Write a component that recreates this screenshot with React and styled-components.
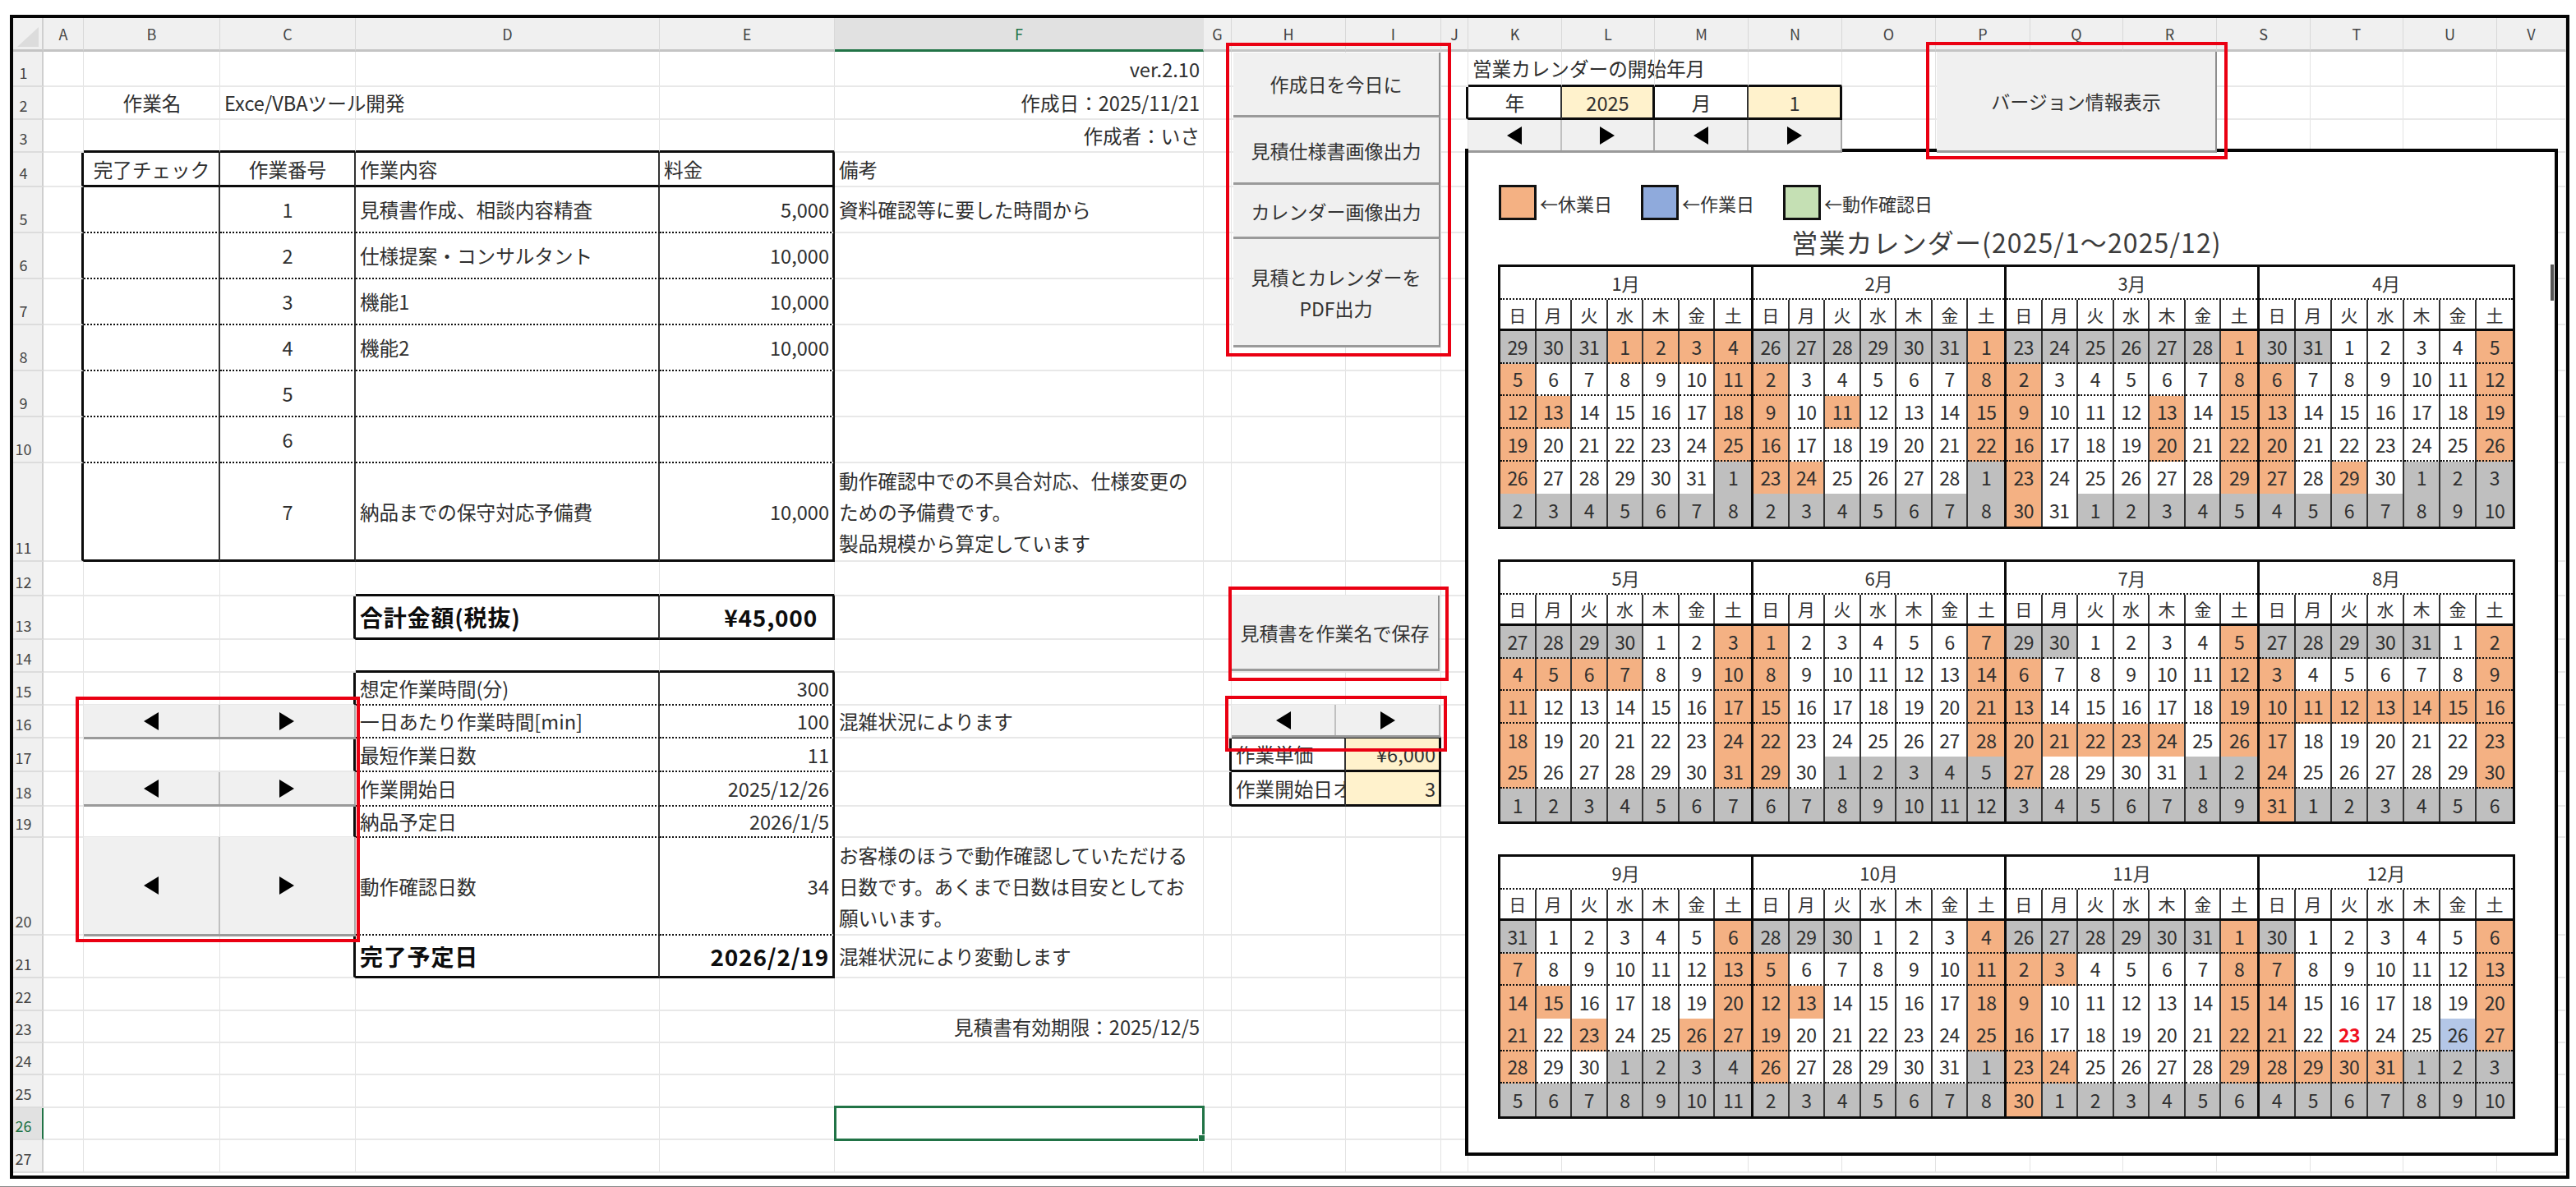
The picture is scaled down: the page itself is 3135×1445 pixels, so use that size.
import React from 'react';
import styled, { createGlobalStyle } from 'styled-components';

const GlobalStyle = createGlobalStyle`
  html, body {
    margin: 0;
    padding: 0;
    background: #fff;
    font-family: "Noto Sans CJK JP", "Noto Sans", sans-serif;
    color: #2b2b2b;
  }
`;

const COLS = 'ABCDEFGHIJKLMNOPQRSTUV'.split('');
const COL_WIDTHS = [49, 166, 165, 370, 213, 449, 34, 139, 116, 33, 114, 113, 114, 114, 114, 115, 113, 114, 114, 113, 114, 84];
const ROW_HEIGHTS = [43, 40, 40, 42, 56, 56, 56, 56, 56, 56, 120, 42, 53, 40, 40, 40, 41, 42, 38, 119, 52, 40, 39, 39, 40, 39, 40];

const LINES = {
  gridH: '2px solid #e8e8e8',
  gridV: '1px solid #e3e3e3',
  thick: '3px solid #0c0c0c',
  thin: '2px solid #333',
  dot: '2px dotted #111',
};

// table rules, kept on the cell above / the cell left of the line
const bottoms = {};
const rights = {};
const hline = (from, to, rows, kind) => {
  const a = COLS.indexOf(from);
  const b = COLS.indexOf(to);
  rows.forEach((r) => {
    for (let i = a; i <= b; i++) bottoms[COLS[i] + r] = kind;
  });
};
const vline = (cols, from, to, kind) => {
  cols.forEach((c) => {
    for (let r = from; r <= to; r++) rights[c + r] = kind;
  });
};

hline('B', 'E', [3, 4, 11], 'thick');
hline('B', 'E', [5, 6, 7, 8, 9, 10], 'dot');
vline(['A', 'E'], 4, 11, 'thick');
vline(['B', 'C', 'D'], 4, 11, 'thin');
hline('D', 'E', [12, 13], 'thick');
vline(['C', 'E'], 13, 13, 'thick');
vline(['D'], 13, 13, 'thin');
hline('D', 'E', [14, 21], 'thick');
hline('D', 'E', [15, 16, 17, 18, 19, 20], 'dot');
vline(['C', 'E'], 15, 21, 'thick');
vline(['D'], 15, 21, 'thin');
hline('H', 'I', [16, 17, 18], 'thick');
vline(['G', 'I'], 17, 18, 'thick');
vline(['H'], 17, 18, 'thin');
hline('K', 'N', [1, 2], 'thick');
vline(['J', 'L', 'N'], 2, 2, 'thick');
vline(['K', 'M'], 2, 2, 'thin');

const YELLOW = '#fff2cc';

const CELLS = {
  F1: { text: 'ver.2.10', align: 'right' },
  K1: { text: '営業カレンダーの開始年月' },
  B2: { text: '作業名', align: 'center' },
  C2: { text: 'Exce/VBAツール開発' },
  F2: { text: '作成日：2025/11/21', align: 'right' },
  K2: { text: '年', align: 'center' },
  L2: { text: '2025', align: 'center', fill: YELLOW },
  M2: { text: '月', align: 'center' },
  N2: { text: '1', align: 'center', fill: YELLOW },
  F3: { text: '作成者：いさ', align: 'right' },
  B4: { text: '完了チェック', align: 'center' },
  C4: { text: '作業番号', align: 'center' },
  D4: { text: '作業内容' },
  E4: { text: '料金' },
  F4: { text: '備考' },
  C5: { text: '1', align: 'center' },
  D5: { text: '見積書作成、相談内容精査' },
  E5: { text: '5,000', align: 'right' },
  F5: { text: '資料確認等に要した時間から' },
  C6: { text: '2', align: 'center' },
  D6: { text: '仕様提案・コンサルタント' },
  E6: { text: '10,000', align: 'right' },
  C7: { text: '3', align: 'center' },
  D7: { text: '機能1' },
  E7: { text: '10,000', align: 'right' },
  C8: { text: '4', align: 'center' },
  D8: { text: '機能2' },
  E8: { text: '10,000', align: 'right' },
  C9: { text: '5', align: 'center' },
  C10: { text: '6', align: 'center' },
  C11: { text: '7', align: 'center' },
  D11: { text: '納品までの保守対応予備費' },
  E11: { text: '10,000', align: 'right' },
  F11: { text: '動作確認中での不具合対応、仕様変更の\nための予備費です。\n製品規模から算定しています' },
  D13: { text: '合計金額(税抜)', bold: true },
  E13: { text: '¥45,000', align: 'right', bold: true, indent: 18 },
  D15: { text: '想定作業時間(分)' },
  E15: { text: '300', align: 'right' },
  D16: { text: '一日あたり作業時間[min]' },
  E16: { text: '100', align: 'right' },
  F16: { text: '混雑状況によります' },
  D17: { text: '最短作業日数' },
  E17: { text: '11', align: 'right' },
  H17: { text: '作業単価' },
  I17: { text: '¥6,000', align: 'right', fill: YELLOW },
  D18: { text: '作業開始日' },
  E18: { text: '2025/12/26', align: 'right' },
  H18: { text: '作業開始日オフセット', clip: true },
  I18: { text: '3', align: 'right', fill: YELLOW },
  D19: { text: '納品予定日' },
  E19: { text: '2026/1/5', align: 'right' },
  D20: { text: '動作確認日数' },
  E20: { text: '34', align: 'right' },
  F20: { text: 'お客様のほうで動作確認していただける\n日数です。あくまで日数は目安としてお\n願いいます。' },
  D21: { text: '完了予定日', bold: true },
  E21: { text: '2026/2/19', align: 'right', bold: true },
  F21: { text: '混雑状況により変動します' },
  F23: { text: '見積書有効期限：2025/12/5', align: 'right' },
};

const Page = styled.div`
  position: relative;
  width: 3135px;
  height: 1445px;
  box-sizing: border-box;
  padding: 18px 8px 0 12px;
  overflow: hidden;
  border-bottom: 1px solid #888;
`;

const Frame = styled.div`
  border: 4px solid #050505;
  width: 3107px;
  height: 1409px;
  overflow: hidden;
`;

const Sheet = styled.div`
  display: grid;
  grid-template-columns: 37px ${COL_WIDTHS.map((w) => `${w}px`).join(' ')};
  grid-template-rows: 41px ${ROW_HEIGHTS.map((h) => `${h}px`).join(' ')} 3px;
`;

const Corner = styled.div`
  background: #f0f0f0;
  border-right: 2px solid #cfcfcf;
  border-bottom: 3px solid #c4c4c4;
  box-sizing: border-box;
  position: relative;

  &::after {
    content: '';
    position: absolute;
    left: 5px;
    top: 11px;
    width: 26px;
    height: 24px;
    background: #dcdcdc;
    clip-path: polygon(100% 0, 100% 100%, 0 100%);
  }
`;

const ColHead = styled.div`
  display: flex;
  align-items: center;
  justify-content: center;
  box-sizing: border-box;
  font-size: 18px;
  background: ${(p) => (p.$selected ? '#e1e1e1' : '#f0f0f0')};
  color: ${(p) => (p.$selected ? '#217346' : '#444')};
  border-right: 1px solid ${(p) => (p.$selected ? '#e1e1e1' : '#d8d8d8')};
  border-bottom: 3px solid ${(p) => (p.$selected ? '#217346' : '#c4c4c4')};
`;

const RowHead = styled.div`
  display: flex;
  align-items: flex-end;
  justify-content: center;
  box-sizing: border-box;
  padding: 0 10px 6px 0;
  font-size: 18px;
  line-height: 20px;
  background: ${(p) => (p.$selected ? '#e1e1e1' : '#f0f0f0')};
  color: ${(p) => (p.$selected ? '#217346' : '#444')};
  border-right: 2px solid ${(p) => (p.$selected ? '#217346' : '#cfcfcf')};
  border-bottom: 2px solid #dcdcdc;
`;

const justify = { left: 'flex-start', center: 'center', right: 'flex-end' };

const Cell = styled.div`
  display: flex;
  align-items: center;
  justify-content: ${(p) => justify[p.$align || 'left']};
  box-sizing: border-box;
  min-width: 0;
  padding: 0 ${(p) => p.$indent || 4}px 0 5px;
  white-space: pre;
  font-size: ${(p) => (p.$bold ? 28 : 23.6)}px;
  letter-spacing: ${(p) => (p.$bold ? 0.8 : 0)}px;
  font-weight: ${(p) => (p.$bold ? 700 : 400)};
  color: ${(p) => (p.$bold ? '#0d0d0d' : '#2f2f2f')};
  line-height: 38px;
  background: ${(p) => p.$fill || 'transparent'};
  overflow: ${(p) => (p.$clip ? 'hidden' : 'visible')};
  border-right: ${(p) => LINES[p.$right]};
  border-bottom: ${(p) => LINES[p.$bottom]};
`;

// shapes that float over the worksheet, as in Excel
const Floating = styled.div`
  position: absolute;
  left: ${(p) => p.$x}px;
  top: ${(p) => p.$y}px;
  width: ${(p) => p.$w}px;
  height: ${(p) => p.$h}px;
  box-sizing: border-box;
`;

const RedBox = styled(Floating)`
  border: 4px solid #ea0012;
  z-index: 5;
`;

const SelectedCell = styled(Floating)`
  border: 3px solid #217346;

  &::after {
    content: '';
    position: absolute;
    right: -4px;
    bottom: -4px;
    width: 7px;
    height: 7px;
    background: #217346;
    border: 1px solid #fff;
  }
`;

const ButtonFace = `
  display: flex;
  align-items: center;
  justify-content: center;
  box-sizing: border-box;
  background: #f0f0f0;
  border-right: 2px solid #8e8e8e;
  border-bottom: 3px solid #9a9a9a;
  font-size: 23px;
  line-height: 38px;
  color: #333;
  white-space: pre;
  text-align: center;
`;

const PushButton = styled(Floating)`
  ${ButtonFace}
  z-index: 3;
`;

const ButtonStack = styled(Floating)`
  display: flex;
  flex-direction: column;
  z-index: 3;
`;

const StackButton = styled.div`
  ${ButtonFace}
  height: ${(p) => p.$h}px;
`;

const Spin = styled(Floating)`
  display: flex;
  background: #f0f0f0;
  border-bottom: 3px solid #9a9a9a;
  z-index: 3;
`;

const SpinHalf = styled.div`
  flex: 1;
  display: flex;
  align-items: center;
  justify-content: center;
  border-right: 2px solid ${(p) => (p.$last ? '#a8a8a8' : '#c0c0c0')};
`;

const Panel = styled(Floating)`
  display: flex;
  flex-direction: column;
  align-items: flex-start;
  padding: 40px 0 0 36px;
  background: #fff;
  border: 4px solid #050505;
  z-index: 2;
`;

const ScrollMark = styled(Floating)`
  background: #555;
  z-index: 3;
`;

const Legend = styled.div`
  display: flex;
  align-items: center;
  gap: 35px;
  margin-left: 1px;
`;

const LegendItem = styled.div`
  display: flex;
  align-items: center;
  gap: 4px;
  font-size: 22px;
  color: #333;
`;

const Swatch = styled.div`
  width: 46px;
  height: 43px;
  box-sizing: border-box;
  border: 3px solid #111;
  background: ${(p) => p.$fill};
`;

const Title = styled.div`
  width: 1238px;
  margin: 8px 0 10px;
  text-align: center;
  font-size: 32px;
  letter-spacing: 1.1px;
  line-height: 36px;
  color: #3c3c3c;
`;

const Block = styled.div`
  display: grid;
  grid-template-columns: repeat(4, 1fr);
  width: 1238px;
  box-sizing: border-box;
  border: 3px solid #0a0a0a;
  margin-bottom: 37px;
`;

const Month = styled.div`
  display: flex;
  flex-direction: column;
  border-right: ${(p) => (p.$last ? 'none' : '3px solid #0a0a0a')};
`;

const MonthName = styled.div`
  height: 40px;
  box-sizing: border-box;
  display: flex;
  align-items: center;
  justify-content: center;
  font-size: 22px;
  color: #333;
  border-bottom: 2px dotted #111;
`;

const DayGrid = styled.div`
  display: grid;
  grid-template-columns: repeat(7, 1fr);
  grid-auto-rows: ${(p) => (p.$head ? '35px' : '39.67px')};
  border-bottom: ${(p) => (p.$head ? '3px solid #0a0a0a' : 'none')};
`;

const Weekday = styled.div`
  display: flex;
  align-items: center;
  justify-content: center;
  font-size: 21px;
  color: #333;
  border-right: ${(p) => (p.$last ? 'none' : '2px solid #333')};
`;

const DAY_FILL = { off: '#f4b183', out: '#bfbfbf', work: '#b4c7e7' };

const Day = styled.div`
  display: flex;
  align-items: center;
  justify-content: center;
  box-sizing: border-box;
  font-size: 23px;
  letter-spacing: -0.5px;
  font-weight: ${(p) => (p.$today ? 700 : 400)};
  color: ${(p) => (p.$today ? '#f01020' : '#2f2f2f')};
  background: ${(p) => DAY_FILL[p.$kind] || '#fff'};
  border-right: ${(p) => (p.$last ? 'none' : '2px solid #333')};
  border-bottom: ${(p) => (p.$rule ? '2px dotted #111' : 'none')};
`;

const HOLIDAYS = [
  [1, 2, 3, 13], [11, 24], [13, 20], [29], [5, 6, 7], [],
  [21, 22, 23, 24], [11, 12, 13, 14, 15], [15, 23, 26], [13], [3, 24], [29, 30, 31],
];

const WEEKDAYS = ['日', '月', '火', '水', '木', '金', '土'];

function buildDays(month) {
  const first = new Date(2025, month, 1);
  const days = [];
  for (let i = 0; i < 42; i++) {
    const d = new Date(2025, month, 1 - first.getDay() + i);
    const inMonth = d.getMonth() === month;
    let kind = 'plain';
    if (!inMonth) kind = 'out';
    else if (d.getDay() === 0 || d.getDay() === 6 || HOLIDAYS[month].includes(d.getDate())) kind = 'off';
    if (month === 11 && inMonth && d.getDate() === 26) kind = 'work';
    days.push({ date: d.getDate(), kind, today: month === 11 && inMonth && d.getDate() === 23 });
  }
  return days;
}

const CalendarMonth = ({ month, last, openWeek }) => (
  <Month $last={last}>
    <MonthName>{month + 1}月</MonthName>
    <DayGrid $head>
      {WEEKDAYS.map((w, i) => (
        <Weekday key={w} $last={i === 6}>{w}</Weekday>
      ))}
    </DayGrid>
    <DayGrid>
      {buildDays(month).map((d, i) => {
        const week = Math.floor(i / 7);
        return (
          <Day
            key={i}
            $kind={d.kind}
            $today={d.today}
            $last={i % 7 === 6}
            $rule={week < 5 && week !== openWeek}
          >
            {d.date}
          </Day>
        );
      })}
    </DayGrid>
  </Month>
);

const Arrow = ({ dir }) => (
  <svg width="18" height="22" viewBox="0 0 18 22">
    <polygon points={dir === 'left' ? '18,0 18,22 0,11' : '0,0 0,22 18,11'} fill="#000" />
  </svg>
);

const SpinPair = (props) => (
  <Spin {...props}>
    <SpinHalf><Arrow dir="left" /></SpinHalf>
    <SpinHalf $last><Arrow dir="right" /></SpinHalf>
  </Spin>
);

const Grid = () => {
  const out = [<Corner key="corner" />];
  COLS.forEach((c) => out.push(<ColHead key={c} $selected={c === 'F'}>{c}</ColHead>));
  ROW_HEIGHTS.forEach((_, idx) => {
    const r = idx + 1;
    out.push(<RowHead key={`r${r}`} $selected={r === 26}>{r}</RowHead>);
    COLS.forEach((c) => {
      const ref = c + r;
      const cell = CELLS[ref] || {};
      out.push(
        <Cell
          key={ref}
          $align={cell.align}
          $bold={cell.bold}
          $indent={cell.indent}
          $fill={cell.fill}
          $clip={cell.clip}
          $right={rights[ref] || 'gridV'}
          $bottom={bottoms[ref] || 'gridH'}
        >
          {cell.text}
        </Cell>
      );
    });
  });
  return <Sheet>{out}</Sheet>;
};

export default function App() {
  return (
    <Page>
      <GlobalStyle />
      <Frame>
        <Grid />
      </Frame>

      <SelectedCell $x={1015} $y={1346} $w={451} $h={43} />

      <ButtonStack $x={1501} $y={64} $w={252} $h={360}>
        <StackButton $h={79}>作成日を今日に</StackButton>
        <StackButton $h={82}>見積仕様書画像出力</StackButton>
        <StackButton $h={66}>カレンダー画像出力</StackButton>
        <StackButton $h={132}>{'見積とカレンダーを\nPDF出力'}</StackButton>
      </ButtonStack>
      <PushButton $x={1499} $y={725} $w={253} $h={92}>見積書を作業名で保存</PushButton>
      <PushButton $x={2357} $y={63} $w={341} $h={123}>バージョン情報表示</PushButton>

      <SpinPair $x={1787} $y={146} $w={227} $h={40} />
      <SpinPair $x={2014} $y={146} $w={228} $h={40} />
      <SpinPair $x={1499} $y={858} $w={254} $h={40} />
      <SpinPair $x={102} $y={858} $w={331} $h={42} />
      <SpinPair $x={102} $y={940} $w={331} $h={42} />
      <SpinPair $x={102} $y={1019} $w={331} $h={121} />

      <Panel $x={1783} $y={181} $w={1330} $h={1226}>
        <Legend>
          <LegendItem><Swatch $fill="#f4b183" />←休業日</LegendItem>
          <LegendItem><Swatch $fill="#8faadc" />←作業日</LegendItem>
          <LegendItem><Swatch $fill="#c5e0b4" />←動作確認日</LegendItem>
        </Legend>
        <Title>営業カレンダー(2025/1～2025/12)</Title>
        {[0, 1, 2].map((b) => (
          <Block key={b}>
            {[0, 1, 2, 3].map((m) => (
              <CalendarMonth key={m} month={b * 4 + m} last={m === 3} openWeek={4 - b} />
            ))}
          </Block>
        ))}
      </Panel>
      <ScrollMark $x={3104} $y={322} $w={4} $h={44} />

      <RedBox $x={1492} $y={52} $w={274} $h={382} />
      <RedBox $x={1495} $y={714} $w={268} $h={115} />
      <RedBox $x={1491} $y={847} $w={270} $h={68} />
      <RedBox $x={92} $y={848} $w={346} $h={299} />
      <RedBox $x={2344} $y={51} $w={367} $h={143} />
    </Page>
  );
}
